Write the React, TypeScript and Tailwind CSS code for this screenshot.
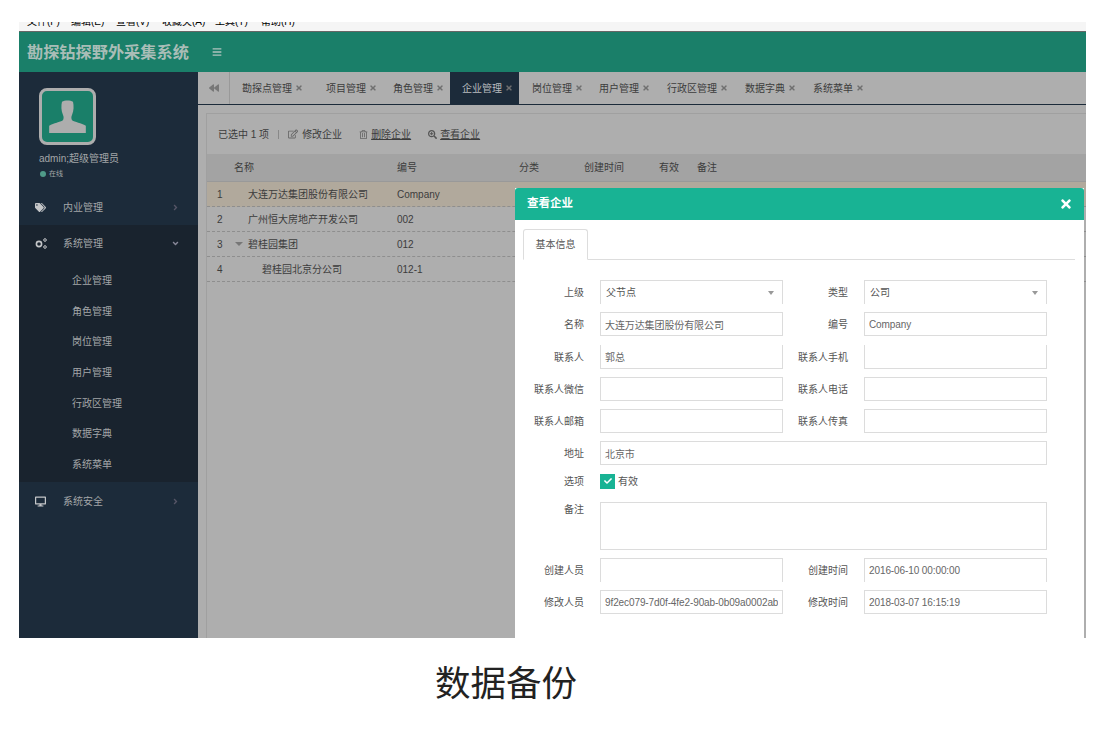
import {
  FaAngleDown,
  FaAngleRight,
  FaBackward,
  FaBars,
  FaCheck,
  FaDesktop,
  FaRegEdit,
  FaRegTrashAlt,
  FaSearchPlus,
  FaTags,
  FaTimes,
} from "react-icons/fa"

const menus = [
  { label: "文件(F)", className: "ml-[8px] w-[44px]" },
  { label: "编辑(E)", className: "w-[45px]" },
  { label: "查看(V)", className: "w-[46px]" },
  { label: "收藏夹(A)", className: "w-[53px]" },
  { label: "工具(T)", className: "w-[46px]" },
  { label: "帮助(H)", className: "w-[46px]" },
]

const tabs = [
  { label: "勘探点管理", className: "pl-[12px] pr-[6px] mr-[11px]" },
  { label: "项目管理", className: "px-[6px] mr-[4px]" },
  { label: "角色管理", className: "px-[6px]" },
  { label: "企业管理", active: true, className: "pl-[12px] pr-[6px] mr-[7px]" },
  { label: "岗位管理", className: "px-[6px] mr-[4px]" },
  { label: "用户管理", className: "px-[6px] mr-[5px]" },
  { label: "行政区管理", className: "px-[6px] mr-[5px]" },
  { label: "数据字典", className: "px-[6px] mr-[5px]" },
  { label: "系统菜单", className: "px-[6px] mr-[4px]" },
]

const subMenus = ["企业管理", "角色管理", "岗位管理", "用户管理", "行政区管理", "数据字典", "系统菜单"]

const rows = [
  { no: "1", name: "大连万达集团股份有限公司", code: "Company", pad: "pl-[15px]", active: true },
  { no: "2", name: "广州恒大房地产开发公司", code: "002", pad: "pl-[15px]" },
  { no: "3", name: "碧桂园集团", code: "012", pad: "pl-[15px]", caret: true },
  { no: "4", name: "碧桂园北京分公司", code: "012-1", pad: "pl-[29px]" },
]

function Input({ value = "", className = "" }: { value?: string; className?: string }) {
  return (
    <input
      readOnly
      value={value}
      className={`h-[24px] min-w-0 border border-[#dcdcdc] px-[4px] text-[10px] tracking-[-0.1px] text-[#666] outline-none ${className}`}
    />
  )
}

function Select({ value }: { value: string }) {
  return (
    <div className="flex h-[24px] w-[183px] items-center justify-between border border-b-0 border-[#dcdcdc] pl-[5px] pr-[8px] text-[10px] text-[#555]">
      {value}
      <span className="h-0 w-0 border-x-[3px] border-t-[4px] border-x-transparent border-t-[#999]" />
    </div>
  )
}

function Label({ text, className = "w-[69px]" }: { text: string; className?: string }) {
  return <div className={`text-right text-[10px] text-[#555] ${className}`}>{text}</div>
}

function Row({ left, leftEl, right, rightEl }: { left: string; leftEl: React.ReactNode; right: string; rightEl: React.ReactNode }) {
  return (
    <div className="flex h-[24px] items-center">
      <Label text={left} />
      <div className="ml-[16px] flex">{leftEl}</div>
      <Label text={right} className="w-[65px]" />
      <div className="ml-[16px] flex">{rightEl}</div>
    </div>
  )
}

function Modal() {
  return (
    <div className="absolute bottom-0 left-[496px] top-[116px] w-[569px] bg-white">
      <div className="flex h-[32px] items-center justify-between rounded-t-[3px] bg-[#18b394] pl-[12px] pr-[11px] text-[11.5px] font-bold text-white">
        查看企业
        <FaTimes className="text-[14px]" />
      </div>

      <div className="mx-[8px] mt-[9px] w-[552px] border-b border-[#ddd]">
        <div className="-mb-px flex h-[31px] w-[65px] items-center justify-center rounded-t-[3px] border border-b-white border-[#ddd] bg-white text-[10px] text-[#555]">
          基本信息
        </div>
      </div>

      <div className="mt-[20px] flex flex-col gap-[8px]">
        <Row left="上级" leftEl={<Select value="父节点" />} right="类型" rightEl={<Select value="公司" />} />
        <Row
          left="名称"
          leftEl={<Input value="大连万达集团股份有限公司" className="w-[183px]" />}
          right="编号"
          rightEl={<Input value="Company" className="w-[183px]" />}
        />
        <div className="mt-px">
          <Row
            left="联系人"
            leftEl={<Input value="郭总" className="w-[183px] border-t-0" />}
            right="联系人手机"
            rightEl={<Input className="w-[183px] border-t-0" />}
          />
        </div>
        <Row left="联系人微信" leftEl={<Input className="w-[183px]" />} right="联系人电话" rightEl={<Input className="w-[183px]" />} />
        <Row left="联系人邮箱" leftEl={<Input className="w-[183px]" />} right="联系人传真" rightEl={<Input className="w-[183px]" />} />
        <div className="flex h-[24px] items-center">
          <Label text="地址" />
          <Input value="北京市" className="ml-[16px] w-[447px]" />
        </div>
        <div className="flex h-[16px] items-center">
          <Label text="选项" />
          <span className="ml-[16px] flex h-[15px] w-[15px] items-center justify-center bg-[#18b394] text-[8px] text-white">
            <FaCheck />
          </span>
          <span className="ml-[3px] text-[10px] text-[#555]">有效</span>
        </div>
        <div className="mt-[5px] flex h-[48px]">
          <Label text="备注" />
          <textarea readOnly className="ml-[16px] h-[48px] w-[447px] resize-none border border-[#dcdcdc] outline-none" />
        </div>
        <Row
          left="创建人员"
          leftEl={<Input className="w-[183px] border-b-0" />}
          right="创建时间"
          rightEl={<Input value="2016-06-10 00:00:00" className="w-[183px] border-b-0" />}
        />
        <Row
          left="修改人员"
          leftEl={<Input value="9f2ec079-7d0f-4fe2-90ab-0b09a0002aba" className="w-[183px]" />}
          right="修改时间"
          rightEl={<Input value="2018-03-07 16:15:19" className="w-[183px]" />}
        />
      </div>
    </div>
  )
}

export default function App() {
  return (
    <div className="h-[729px] overflow-hidden bg-white pt-[22px] font-['Liberation_Sans','Noto_Sans_CJK_SC',sans-serif]">
      <div className="ml-[19px] w-[1067px]">
        <div className="flex h-[10px] overflow-hidden border-b border-[#666] bg-[#f5f5f5] text-[10px] leading-none text-black">
          {menus.map((m) => (
            <span key={m.label} className={`-mt-[5px] shrink-0 ${m.className}`}>
              {m.label}
            </span>
          ))}
        </div>

        <header className="flex h-[40px] items-center bg-[#1a7f69] pl-[8px]">
          <span className="text-[16.2px] font-bold text-[#a9bdb7]">勘探钻探野外采集系统</span>
          <FaBars className="ml-[23px] text-[10px] text-[#b0c4be]" />
        </header>

        <div className="relative flex h-[566px]">
          <aside className="w-[179px] shrink-0 bg-[#1c2b3a] text-[10px] text-[#a3a6a8]">
            <div className="pl-[20px] pt-[16px]">
              <div className="flex h-[57px] w-[57px] items-end justify-center overflow-hidden rounded-[8px] border-[3px] border-[#adadad] bg-[#1a7f69]">
                <svg viewBox="0 0 40 36" className="mb-[9px] h-[33px] w-[37px] fill-[#adadad]">
                  <path d="M14 2c3-2 9-2 12 0 1 4 1 10-1 14-1 2-1 4 0 6 3 2 10 3 15 6v8H0v-8c5-3 12-4 15-6 1-2 1-4 0-6-2-4-2-10-1-14z" />
                </svg>
              </div>
              <div className="mt-[7px] h-[14px] text-[10px] leading-[14px]">admin;超级管理员</div>
              <div className="mt-[3px] flex items-center gap-[3px] text-[7px] leading-[10px]">
                <span className="ml-px h-[6px] w-[6px] rounded-full bg-[#4f9a88]" />
                在线
              </div>
            </div>

            <div className="mt-[10px] flex h-[36px] items-center pl-[16px] pr-[18px]">
              <FaTags className="w-[11px] text-[11px] text-[#c4c6c8]" />
              <span className="ml-[17px] flex-1">内业管理</span>
              <FaAngleRight className="text-[9px] text-[#556]" />
            </div>

            <div className="h-[257px] bg-[#19232e]">
              <div className="flex h-[36px] items-center pl-[16px] pr-[18px]">
                <svg viewBox="0 0 12 11" className="h-[11px] w-[12px] fill-none stroke-[#c4c6c8]">
                  <circle cx="4" cy="6" r="2.6" strokeWidth="1.6" />
                  <circle cx="10" cy="2" r="1.3" strokeWidth="1" />
                  <circle cx="10" cy="9" r="1.3" strokeWidth="1" />
                </svg>
                <span className="ml-[16px] flex-1">系统管理</span>
                <FaAngleDown className="text-[9px] text-[#889]" />
              </div>
              <div className="flex flex-col pl-[53px] pt-[4px]">
                {subMenus.map((s) => (
                  <div key={s} className="flex h-[30.7px] items-center">
                    {s}
                  </div>
                ))}
              </div>
            </div>

            <div className="flex h-[38px] items-center pl-[16px] pr-[18px]">
              <FaDesktop className="w-[11px] text-[11px] text-[#c4c6c8]" />
              <span className="ml-[17px] flex-1">系统安全</span>
              <FaAngleRight className="text-[9px] text-[#556]" />
            </div>
          </aside>

          <main className="min-w-0 flex-1 bg-[#aeaeae] text-[10px] text-[#3c3c3c]">
            <div className="flex h-[33px] items-stretch border-b border-[#1c2b3a]">
              <div className="flex w-[32px] items-center justify-center border-r border-[#999] text-[10px] text-[#777]">
                <FaBackward />
              </div>
              {tabs.map((t) => (
                <div
                  key={t.label}
                  className={`flex items-center gap-[3px] ${t.className} ${t.active ? "bg-[#1c2b3a] text-[#b9bcbf]" : ""}`}
                >
                  {t.label}
                  <FaTimes className="text-[8px] text-[#6f6f6f]" />
                </div>
              ))}
            </div>

            <div className="ml-[8px] mt-[8px] h-[525px] border-l border-t border-[#a0a0a0]">
              <div className="flex h-[40px] items-center pl-[11px]">
                <span>已选中 1 项</span>
                <span className="ml-[9px] h-[9px] w-px bg-[#888]" />
                <FaRegEdit className="ml-[9px] text-[10px] text-[#666]" />
                <span className="ml-[4px]">修改企业</span>
                <FaRegTrashAlt className="ml-[17px] text-[9px] text-[#666]" />
                <span className="ml-[3px] underline">删除企业</span>
                <FaSearchPlus className="ml-[17px] text-[9px] text-[#555]" />
                <span className="ml-[3px] underline">查看企业</span>
              </div>

              <div className="flex h-[28px] items-center border-b border-[#999] bg-[#a3a3a3]">
                <span className="ml-[27px] w-[163px]">名称</span>
                <span className="w-[122px]">编号</span>
                <span className="w-[65px]">分类</span>
                <span className="w-[75px]">创建时间</span>
                <span className="w-[38px]">有效</span>
                <span>备注</span>
              </div>

              {rows.map((r) => (
                <div
                  key={r.no}
                  className={`flex h-[25px] items-center border-b border-dashed border-[#8e8e8e] ${r.active ? "bg-[#b1a99c]" : ""}`}
                >
                  <span className="w-[26px] pl-[10px]">{r.no}</span>
                  <span className={`relative w-[164px] ${r.pad}`}>
                    {r.caret && (
                      <span className="absolute left-[2px] top-[5px] h-0 w-0 border-x-[4px] border-t-[4px] border-x-transparent border-t-[#777]" />
                    )}
                    {r.name}
                  </span>
                  <span>{r.code}</span>
                </div>
              ))}
            </div>
          </main>

          <Modal />
        </div>
      </div>

      <div className="ml-[435px] mt-[20px] text-[35.5px] leading-[52px] text-[#222]">数据备份</div>
    </div>
  )
}
